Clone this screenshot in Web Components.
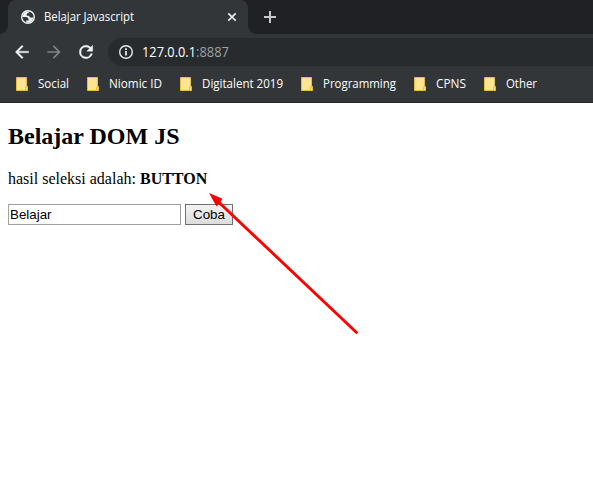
<!DOCTYPE html>
<html lang="id">
<head>
<meta charset="utf-8">
<title>Belajar Javascript</title>
<style>
html, body { margin: 0; height: 481px; overflow: hidden; background: #fff; }
</style>
</head>
<body>
<browser-window></browser-window>
<script>
const define = (name, html, setup) => customElements.define(name, class extends HTMLElement {
  constructor() {
    super();
    const t = document.createElement('template');
    t.innerHTML = html;
    this.attachShadow({ mode: 'open' }).append(t.content.cloneNode(true));
  }
  connectedCallback() { if (setup) setup(this); }
});

// Text condensed to a given width, like a narrow UI face.
define('fit-text', `<style>
  :host { display: block; flex: none; white-space: nowrap; overflow: visible; }
  span { display: inline-block; transform-origin: 0 50%; }
</style><span><slot></slot></span>`, el => {
  const w = parseFloat(el.getAttribute('width'));
  const s = el.shadowRoot.querySelector('span');
  el.style.width = w + 'px';
  s.style.transform = 'scaleX(' + w / s.getBoundingClientRect().width + ')';
});

define('tab-strip', `<style>
  :host { display: flex; height: 34px; background: #202124; padding-left: 8px; box-sizing: border-box; }
  .tab { position: relative; display: flex; align-items: center; width: 240px; height: 34px; box-sizing: border-box; padding: 0 11px 0 13px; background: #323639; border-radius: 8px 8px 0 0; }
  .tab::before, .tab::after { content: ""; position: absolute; bottom: 0; width: 8px; height: 8px; }
  .tab::before { left: -8px; background: radial-gradient(circle at 0 0, transparent 7.5px, #323639 8px); }
  .tab::after { right: -8px; background: radial-gradient(circle at 100% 0, transparent 7.5px, #323639 8px); }
  .title { margin-left: 9px; flex: 1; font: 12px/16px "Open Sans", sans-serif; color: #fff; }
  svg { display: block; flex: none; }
  .plus { margin: 11px 0 0 16px; }
</style>
<div class="tab">
  <svg width="14" height="14" viewBox="2 2 20 20"><circle cx="12" cy="12" r="9" fill="none" stroke="#f1f3f4" stroke-width="2"/><path fill="#f1f3f4" d="M4 12h4.400c3.407.022 4.922 1.730 4.543 5.127H9.488v2.470a8.004 8.004 0 0 0 10.498-8.083C19.327 12.504 18.332 13 17 13c-2.137 0-3.206-.916-3.206-2.750h-3.748c-.274-2.728.683-4.092 2.870-4.092 0-.975.327-1.597.811-1.970A8.004 8.004 0 0 0 4 12z"/></svg>
  <div class="title"><fit-text width="90">Belajar Javascript</fit-text></div>
  <svg width="10" height="10" viewBox="0 0 10 10"><path d="M1.300 1.300l7.400 7.400M8.700 1.300L1.300 8.700" stroke="#e8eaed" stroke-width="1.700"/></svg>
</div>
<svg class="plus" width="12" height="12" viewBox="0 0 12 12"><path d="M6 0v12M0 6h12" stroke="#c7c9cb" stroke-width="2"/></svg>`);

define('nav-toolbar', `<style>
  :host { display: flex; align-items: center; height: 36px; background: #323639; color: #f1f3f4; }
  svg { display: block; flex: none; }
  .back { margin-left: 12px; }
  .fwd { margin-left: 12px; color: #7f8285; }
  .reload { margin-left: 12px; }
  .address { display: flex; align-items: center; flex: 1; height: 28px; margin-left: 12px; padding-left: 9px; background: #282b2e; border-radius: 14px 0 0 14px; font: 14px/20px "Open Sans", sans-serif; color: #fff; }
  .host { margin-left: 7px; }
  .port { color: #9aa0a6; }
</style>
<svg class="back" width="20" height="20" viewBox="0 0 24 24"><path fill="currentColor" stroke="currentColor" stroke-width=".4" d="M20 11H7.830l5.590-5.590L12 4l-8 8 8 8 1.410-1.410L7.830 13H20z"/></svg>
<svg class="fwd" width="20" height="20" viewBox="0 0 24 24"><path fill="currentColor" d="M4 11h12.170l-5.590-5.590L12 4l8 8-8 8-1.410-1.410L16.170 13H4z"/></svg>
<svg class="reload" width="20" height="20" viewBox="0 0 24 24"><path fill="currentColor" stroke="currentColor" stroke-width=".5" d="M17.650 6.350A7.960 7.960 0 0 0 12 4a8 8 0 1 0 7.730 10h-2.080A6 6 0 1 1 12 6c1.660 0 3.140.69 4.220 1.780L13 11h7V4z"/></svg>
<div class="address">
  <svg width="18" height="18" viewBox="0 0 18 18"><circle cx="9" cy="9" r="6.300" fill="none" stroke="#e8eaed" stroke-width="1.400"/><path d="M9 8v4.400M9 5.300v1.600" stroke="#f1f3f4" stroke-width="1.700"/></svg>
  <fit-text class="host" width="54">127.0.0.1</fit-text><fit-text class="port" width="33">:8887</fit-text>
</div>`);

define('bookmark-item', `<style>
  :host { display: flex; align-items: center; gap: 10px; font: 12px/16px "Open Sans", sans-serif; color: #fff; }
  svg { display: block; flex: none; }
</style>
<svg width="12" height="14" viewBox="0 0 12 14"><path d="M.5.500h10v9h1v4H.5z" fill="#ffe593" stroke="#e8bd3e"/><path d="M9.500 13.500v-3.500h2" fill="none" stroke="#e8bd3e"/></svg>
<slot></slot>`);

define('bookmarks-bar', `<style>
  :host { display: flex; align-items: center; gap: 18px; height: 33px; box-sizing: border-box; padding: 0 0 4px 16px; background: #323639; border-bottom: 1px solid #252729; }
</style>
<bookmark-item><fit-text width="31">Social</fit-text></bookmark-item>
<bookmark-item><fit-text width="53">Niomic ID</fit-text></bookmark-item>
<bookmark-item><fit-text width="81">Digitalent 2019</fit-text></bookmark-item>
<bookmark-item><fit-text width="73">Programming</fit-text></bookmark-item>
<bookmark-item><fit-text width="30">CPNS</fit-text></bookmark-item>
<bookmark-item><fit-text width="31">Other</fit-text></bookmark-item>`);

define('page-content', `<style>
  :host { display: block; padding: 20px 8px 0; font: 16px/18px "Liberation Serif", serif; color: #000; }
  h2 { margin: 0 0 20px; font: bold 24px/27px "Liberation Serif", serif; }
  p { margin: 0 0 16px; }
  .form { display: flex; gap: 4px; }
  input, button { box-sizing: border-box; height: 21px; margin: 0; border-radius: 0; font: 13.333px/15px "Liberation Sans", sans-serif; color: #000; appearance: none; }
  input { width: 173px; padding: 1px; border: 1px solid #a0a0a0; background: #fff; }
  button { width: 48px; padding: 0; border: 1px solid #707070; background: linear-gradient(#f3f3f3, #dcdcdc); }
</style>
<h2>Belajar DOM JS</h2>
<p>hasil seleksi adalah: <b>BUTTON</b></p>
<div class="form"><input value="Belajar"><button>Coba</button></div>`);

// Red pointer lying over the page.
define('arrow-mark', `<style>
  :host { position: absolute; left: 0; top: 0; pointer-events: none; }
  svg { display: block; }
</style>
<svg width="593" height="481"><path d="M217 200.500L357.300 333.300" stroke="#f00" stroke-width="2.900"/><path d="M209 193L222.500 198.700 220 202.500 216.500 206.500z" fill="#f00"/></svg>`);

define('browser-window', `<style>
  :host { display: block; position: relative; width: 593px; height: 481px; overflow: hidden; background: #fff; }
</style>
<tab-strip></tab-strip><nav-toolbar></nav-toolbar><bookmarks-bar></bookmarks-bar>
<page-content></page-content><arrow-mark></arrow-mark>`);
</script>
</body>
</html>
